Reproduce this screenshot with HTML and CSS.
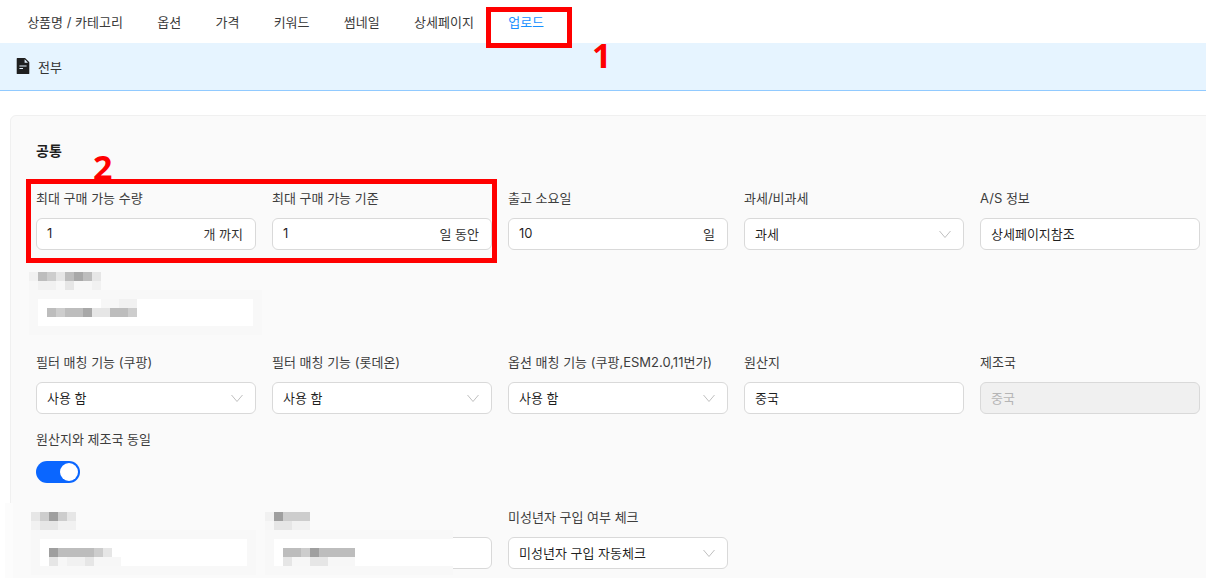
FILE: index.html
```html
<!DOCTYPE html>
<html lang="ko">

<head>
    <meta charset="UTF-8">
    <title>상품 수정</title>
    <link rel="stylesheet" href="styles.css">
</head>

<body>
    <nav class="tabs">
        <a class="tab">상품명 / 카테고리</a>
        <a class="tab">옵션</a>
        <a class="tab">가격</a>
        <a class="tab">키워드</a>
        <a class="tab">썸네일</a>
        <a class="tab">상세페이지</a>
        <a class="tab active">업로드</a>
    </nav>

    <div class="notice">
        <svg class="notice-icon" viewBox="64 64 896 896" fill="currentColor">
            <path d="M854.6 288.7c6 6 9.4 14.1 9.4 22.6V928c0 17.7-14.3 32-32 32H192c-17.7 0-32-14.3-32-32V96c0-17.7 14.3-32 32-32h424.7c8.5 0 16.7 3.4 22.7 9.4l215.2 215.3zM790.2 326L602 137.8V326h188.2zM320 482a8 8 0 00-8 8v48a8 8 0 008 8h384a8 8 0 008-8v-48a8 8 0 00-8-8H320zm0 136a8 8 0 00-8 8v48a8 8 0 008 8h184a8 8 0 008-8v-48a8 8 0 00-8-8H320z" />
        </svg>
        <span>전부</span>
    </div>

    <main class="content">
        <section class="card">
            <h2 class="card-title">공통</h2>

            <div class="form-row">
                <div class="field">
                    <label>최대 구매 가능 수량</label>
                    <div class="control"><span>1</span><span class="suffix">개 까지</span></div>
                </div>
                <div class="field">
                    <label>최대 구매 가능 기준</label>
                    <div class="control"><span>1</span><span class="suffix">일 동안</span></div>
                </div>
                <div class="field">
                    <label>출고 소요일</label>
                    <div class="control"><span>10</span><span class="suffix">일</span></div>
                </div>
                <div class="field">
                    <label>과세/비과세</label>
                    <div class="control"><span>과세</span><svg class="chevron" viewBox="0 0 12 8"><path d="M.5 1 6 7.5 11.5 1" /></svg></div>
                </div>
                <div class="field">
                    <label>A/S 정보</label>
                    <div class="control"><span>상세페이지참조</span></div>
                </div>
            </div>

            <div class="form-row">
                <div class="field">
                    <label>&nbsp;</label>
                    <div class="control"></div>
                    <div class="mosaic mosaic-a">
                        <div class="halo"></div>
                        <div class="sheet"></div>
                        <div class="cells label-top"><i class="s6"></i><i class="s3"></i><i class="s4"></i><i class="s5"></i><i class="s3"></i><i class="s1"></i><i class="s3"></i><i class="s5"></i></div>
                        <div class="cells label-bottom"><i class="s7"></i><i class="s6"></i><i class="s6"></i><i class="s7"></i><i class="s5"></i><i class="s7"></i><i class="s7"></i><i class="s6"></i></div>
                        <div class="cells value-top"><i></i><i></i><i></i><i></i><i></i><i></i><i class="s7"></i><i class="s7"></i><i class="s6"></i><i class="s6"></i></div>
                        <div class="cells value"><i class="s3"></i><i class="s4"></i><i class="s3"></i><i class="s3"></i><i class="s1"></i><i class="s5"></i><i class="s5"></i><i class="s3"></i><i class="s3"></i><i class="s4"></i></div>
                    </div>
                </div>
            </div>

            <div class="form-row form-row-tight">
                <div class="field">
                    <label>필터 매칭 기능 (쿠팡)</label>
                    <div class="control"><span>사용 함</span><svg class="chevron" viewBox="0 0 12 8"><path d="M.5 1 6 7.5 11.5 1" /></svg></div>
                </div>
                <div class="field">
                    <label>필터 매칭 기능 (롯데온)</label>
                    <div class="control"><span>사용 함</span><svg class="chevron" viewBox="0 0 12 8"><path d="M.5 1 6 7.5 11.5 1" /></svg></div>
                </div>
                <div class="field">
                    <label>옵션 매칭 기능 (쿠팡,ESM2.0,11번가)</label>
                    <div class="control"><span>사용 함</span><svg class="chevron" viewBox="0 0 12 8"><path d="M.5 1 6 7.5 11.5 1" /></svg></div>
                </div>
                <div class="field">
                    <label>원산지</label>
                    <div class="control"><span>중국</span></div>
                </div>
                <div class="field">
                    <label>제조국</label>
                    <div class="control disabled"><span>중국</span></div>
                </div>
            </div>

            <div class="form-row form-row-switch">
                <div class="field">
                    <label>원산지와 제조국 동일</label>
                    <div class="switch"><span class="switch-knob"></span></div>
                </div>
            </div>

            <div class="form-row">
                <div class="field">
                    <label>&nbsp;</label>
                    <div class="control"></div>
                    <div class="mosaic mosaic-b">
                        <div class="edge"></div>
                        <div class="halo"></div>
                        <div class="sheet"></div>
                        <div class="cells label-top"><i class="s5"></i><i class="s4"></i><i class="s2"></i><i class="s4"></i><i class="s5"></i></div>
                        <div class="cells label-bottom"><i class="s6"></i><i class="s5"></i><i class="s5"></i><i class="s6"></i><i class="s6"></i></div>
                        <div class="cells value"><i class="s2"></i><i class="s3"></i><i class="s3"></i><i class="s3"></i><i class="s3"></i><i class="s4"></i><i class="s5"></i></div>
                        <div class="cells value-bottom"><i class="s5"></i><i class="s7"></i><i class="s6"></i><i class="s6"></i><i class="s5"></i><i class="s7"></i><i class="s7"></i><i class="s7"></i></div>
                    </div>
                </div>
                <div class="field">
                    <label>&nbsp;</label>
                    <div class="control"></div>
                    <div class="mosaic mosaic-c">
                        <div class="halo"></div>
                        <div class="sheet"></div>
                        <div class="cells label-top"><i class="s6"></i><i class="s2"></i><i class="s4"></i><i class="s4"></i><i class="s4"></i></div>
                        <div class="cells label-bottom"><i class="s7"></i><i class="s5"></i><i class="s5"></i><i class="s6"></i><i class="s6"></i></div>
                        <div class="cells value"><i class="s3"></i><i class="s3"></i><i class="s4"></i><i class="s2"></i><i class="s3"></i><i class="s3"></i><i class="s3"></i><i class="s3"></i></div>
                        <div class="cells value-bottom"><i class="s5"></i><i class="s7"></i><i class="s7"></i><i class="s5"></i><i class="s5"></i><i class="s7"></i><i class="s7"></i><i class="s7"></i></div>
                    </div>
                </div>
                <div class="field">
                    <label>미성년자 구입 여부 체크</label>
                    <div class="control"><span>미성년자 구입 자동체크</span><svg class="chevron" viewBox="0 0 12 8"><path d="M.5 1 6 7.5 11.5 1" /></svg></div>
                </div>
            </div>
        </section>
    </main>

    <!-- red markup drawn over the screen capture -->
    <div class="mark mark-tab"></div>
    <div class="mark mark-fields"></div>
    <span class="mark-number number-one">1</span>
    <span class="mark-number number-two">2</span>
</body>

</html>
```

FILE: styles.css
```css
:root {
    --text: rgba(0, 0, 0, 0.88);
    --label: #3d3d3d;
    --accent: #1890ff;
    --border: #d9d9d9;
    --mark: #ff0000;
}

* {
    box-sizing: border-box;
}

html,
body {
    height: 100%;
    margin: 0;
    overflow: hidden;
    background-color: #fff;
    color: var(--text);
    font-family: "Inter", "Noto Sans CJK KR", sans-serif;
    font-size: 13px;
}

.tabs {
    display: flex;
    height: 43px;
    padding-left: 10px;
}

.tab {
    padding: 0 17.17px;
    line-height: 44px;
    white-space: nowrap;
    color: #3a3a3a;
}

.tab.active {
    color: var(--accent);
}

.notice {
    display: flex;
    align-items: center;
    gap: 7px;
    height: 48px;
    padding: 0 0 1px 15px;
    background-color: #e6f4ff;
    border-bottom: 1px solid #91caff;
    color: #333;
}

.notice-icon {
    width: 16px;
    height: 16px;
    color: #1f1f1f;
}

.content {
    height: 487px;
    padding: 24px 0 0 10px;
    overflow: hidden;
}

.card {
    width: 1240px;
    height: 600px;
    padding: 23px 25px;
    background-color: #fafafa;
    border: 1px solid #f0f0f0;
    border-radius: 6px;
}

.card-title {
    height: 26px;
    margin: 0 0 23px;
    font-size: 14px;
    font-weight: 700;
    line-height: 24px;
    color: #1f1f1f;
}

.form-row {
    display: grid;
    grid-template-columns: repeat(5, 220px);
    column-gap: 16px;
    margin-bottom: 20px;
}

.form-row-tight {
    margin-bottom: 15px;
}

.form-row-switch {
    height: 78px;
    margin-bottom: 0;
}

.field {
    position: relative;
}

.field label {
    display: block;
    height: 22px;
    margin-bottom: 8px;
    line-height: 21px;
    white-space: nowrap;
    color: var(--label);
}

.control {
    display: flex;
    align-items: center;
    justify-content: space-between;
    height: 32px;
    padding: 0 12px 2px 10px;
    background-color: #fff;
    border: 1px solid var(--border);
    border-radius: 6px;
    white-space: nowrap;
}

.control.disabled {
    background-color: #f0f0f0;
    color: #b5b5b5;
}

.suffix {
    color: #333;
}

.chevron {
    width: 12px;
    height: 8px;
    margin-top: 2px;
    fill: none;
    stroke: #bfbfbf;
    stroke-width: 1;
}

.switch {
    display: flex;
    justify-content: flex-end;
    align-items: center;
    width: 44px;
    height: 22px;
    margin-top: 10px;
    padding: 2px;
    background-color: #0a66ff;
    border-radius: 11px;
}

.switch-knob {
    width: 18px;
    height: 18px;
    background-color: #fff;
    border-radius: 50%;
}

/* pixelated blur over the hidden values */
.mosaic {
    position: absolute;
    top: 2px;
    height: 63px;
}

.mosaic-a {
    left: -7px;
    width: 233px;
}

.mosaic-b {
    top: 5px;
    left: -5px;
    width: 225px;
}

.mosaic-c {
    top: 5px;
    left: -7px;
    width: 188px;
}

.edge {
    position: absolute;
    top: -9px;
    left: -26px;
    width: 8px;
    height: 80px;
    background-color: #fcfcfc;
}

.halo {
    position: absolute;
    inset: 18px 0 0;
    background-color: #f8f8f8;
}

.sheet {
    position: absolute;
    top: 27px;
    left: 9px;
    right: 9px;
    height: 27px;
    background-color: #fff;
}

.mosaic-c .sheet {
    right: 0;
}

.cells {
    position: absolute;
    display: flex;
}

.cells i {
    width: 9px;
    height: 9px;
}

.label-top {
    top: 0;
    left: 0;
}

.label-bottom {
    top: 9px;
    left: 0;
}

.value-top {
    top: 27px;
    left: 18px;
}

.value {
    top: 36px;
    left: 18px;
}

.value-bottom {
    top: 45px;
    left: 18px;
}

.s1 { background-color: #a8a8a8; }
.s2 { background-color: #9f9f9f; }
.s3 { background-color: #bdbdbd; }
.s4 { background-color: #cdcdcd; }
.s5 { background-color: #e6e6e6; }
.s6 { background-color: #f1f1f1; }
.s7 { background-color: #f7f7f7; }

/* annotations */
.mark {
    position: absolute;
    border: 5px solid var(--mark);
}

.mark-tab {
    left: 486px;
    top: 7px;
    width: 86px;
    height: 41px;
}

.mark-fields {
    left: 26px;
    top: 179px;
    width: 471px;
    height: 84px;
}

.mark-number {
    position: absolute;
    font-family: "Noto Sans", sans-serif;
    font-size: 34px;
    font-weight: 700;
    line-height: 34px;
    color: var(--mark);
}

.number-one {
    left: 592px;
    top: 38px;
}

.number-two {
    left: 93px;
    top: 150px;
}
```
